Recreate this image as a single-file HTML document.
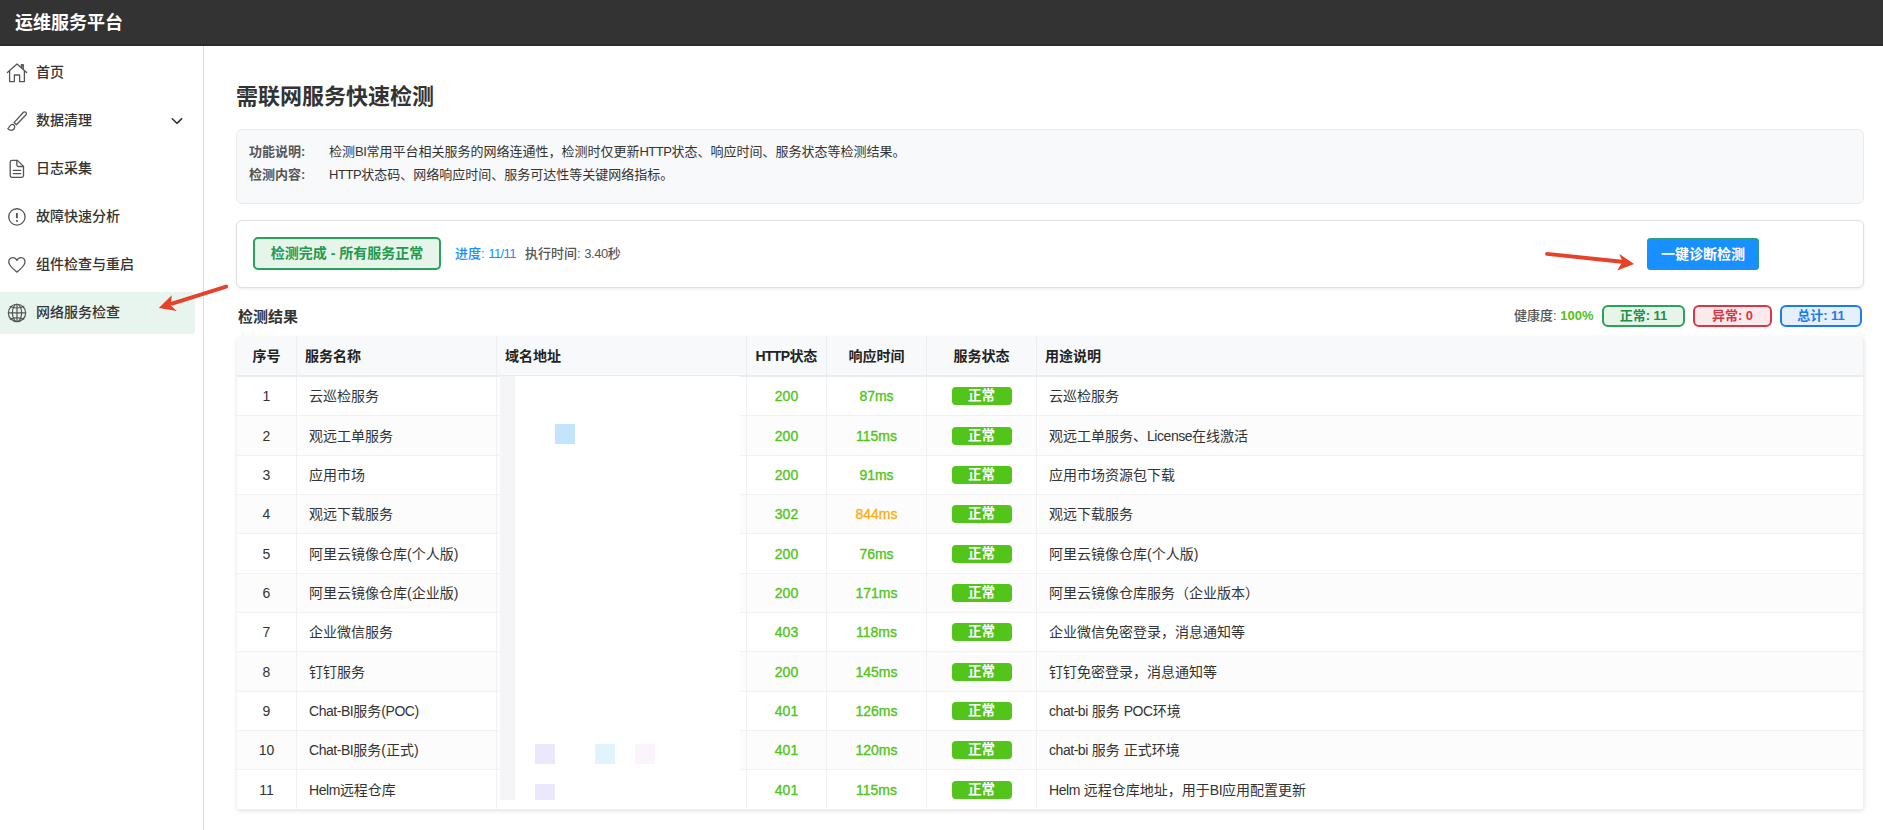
<!DOCTYPE html>
<html lang="zh-CN">
<head>
<meta charset="utf-8">
<title>运维服务平台</title>
<style>
*{box-sizing:border-box;margin:0;padding:0}
html,body{width:1883px;height:830px;overflow:hidden;background:#fff}
body{font-family:"Liberation Sans","Noto Sans CJK SC",sans-serif;color:#333;font-size:14px;position:relative}
.hdr{position:absolute;left:0;top:0;width:1883px;height:46px;background:#333;border-bottom:2px solid #2a2a2a}
.hdr .t{position:absolute;left:15px;top:9px;font-size:18px;font-weight:700;color:#fff;line-height:28px;letter-spacing:0}
.side{position:absolute;left:0;top:46px;width:204px;height:784px;border-right:1px solid #dcdcdc;background:#fff}
.mi{position:absolute;left:0;width:195px;height:42px;line-height:42px;font-size:14px;color:#333}
.mi.act{background:#e8f5ee;border-radius:0 4px 4px 0}
.ico{position:absolute;left:0;top:0;width:204px;height:830px}
.mi .lb{position:absolute;left:36px;top:0;white-space:nowrap;font-weight:500}
.mi.act .lb{top:-1px}
.main{position:absolute;left:204px;top:46px;width:1679px;height:784px}
h1{position:absolute;left:236px;top:81px;font-size:22px;font-weight:700;color:#333;line-height:32px;white-space:nowrap}
.info{position:absolute;left:236px;top:129px;width:1628px;height:75px;background:#f8f9fa;border:1px solid #e9ecef;border-radius:6px;font-size:13px;color:#333}
.info .r{position:absolute;left:12px;white-space:nowrap;line-height:24px}
.info .r b{font-weight:700;color:#555;display:inline-block;width:80px}
.stat{position:absolute;left:236px;top:220px;width:1628px;height:68px;background:#fff;border:1px solid #dfdfdf;border-radius:6px;box-shadow:0 1px 3px rgba(0,0,0,.08)}
.badge{position:absolute;left:16px;top:16px;width:188px;height:33px;border:2px solid #27a35a;border-radius:5px;background:#e6f4ea;color:#1f9a50;font-weight:700;font-size:14px;line-height:29px;text-align:center;white-space:nowrap}
.prog{position:absolute;left:218px;top:22px;font-size:13px;font-weight:500;color:#1890ff;line-height:22px;white-space:nowrap}
.time{position:absolute;left:288px;top:22px;font-size:13px;font-weight:500;color:#555;line-height:22px;white-space:nowrap}
.btn{position:absolute;left:1410px;top:17px;width:112px;height:32px;background:#1890ff;border:1px solid #2aa37a;border-radius:3px;color:#fff;font-weight:700;font-size:14px;line-height:30px;text-align:center;white-space:nowrap}
.rt{position:absolute;left:238px;top:306px;font-size:15px;font-weight:700;color:#333;line-height:22px}
.sum{position:absolute;top:305px;height:22px;font-size:13px;font-weight:500;line-height:22px;white-space:nowrap}
.pill{position:absolute;top:305px;height:22px;border-radius:6px;border:2px solid;font-size:13px;font-weight:700;line-height:18px;text-align:center;white-space:nowrap}
table{position:absolute;left:237px;top:337px;width:1627px;border-collapse:separate;border-spacing:0;table-layout:fixed;font-size:14px;line-height:20px;box-shadow:0 1px 4px rgba(0,0,0,.12)}
th{height:40px;background:#f8f9fa;font-weight:700;color:#222;text-align:left;border-right:1px solid #eceef0;border-bottom:2px solid #e9ecef;padding:0 8px;white-space:nowrap}
td{height:39.35px;border-right:1px solid #f1f1f3;border-bottom:1px solid #f1f1f3;padding:0 12px;white-space:nowrap;color:#333}
tr:nth-child(even) td{background:#fcfcfc}
.mask{position:absolute;left:500px;top:376px;width:240px;height:433px;background:#fff}
.mask i{position:absolute;display:block;width:20px;height:20px}
th:first-child{border-top-left-radius:4px}
th:last-child{border-top-right-radius:4px}
table{border-radius:4px}
.l{letter-spacing:-.45px}
.c{text-align:center;padding:0}
.g{color:#52c41a;font-weight:500;-webkit-text-stroke:.35px #52c41a}
.o{color:#faad14;font-weight:500;-webkit-text-stroke:.35px #faad14}
.ok{display:block;margin:0 auto;width:60px;height:18px;line-height:18px;background:#52c41a;color:#fff;font-weight:700;font-size:13.5px;border-radius:4px;text-align:center}
</style>
</head>
<body>
<div class="hdr"><div class="t">运维服务平台</div></div>
<div class="side">
  <div class="mi" style="top:5px"><span class="lb">首页</span></div>
  <div class="mi" style="top:53px"><span class="lb">数据清理</span></div>
  <div class="mi" style="top:101px"><span class="lb">日志采集</span></div>
  <div class="mi" style="top:149px"><span class="lb">故障快速分析</span></div>
  <div class="mi" style="top:197px"><span class="lb">组件检查与重启</span></div>
  <div class="mi act" style="top:246px"><span class="lb">网络服务检查</span></div>
</div>
<svg class="ico" viewBox="0 0 204 830" fill="none" stroke="#555" stroke-width="1.3" stroke-linecap="round" stroke-linejoin="round">
  <!-- home -->
  <path d="M7.4 72.5 L17 63.9 L26.6 72.5"/>
  <path d="M9.6 71.2 V81.6 H14.4 V75 H19.6 V81.6 H24.4 V71.2"/>
  <path d="M21.4 67.4 V64.7 H23.3 V69" fill="#999"/>
  <!-- brush -->
  <path d="M14 122.6 L23.2 112.5 C24 111.7 25.2 111.7 25.9 112.4 C26.6 113.1 26.5 114.3 25.8 115 L16.4 124.8 Z"/>
  <path d="M7.9 128.6 C9.5 127.6 9.4 125.2 11.6 124.5 C13.4 124 14.8 125.4 14.7 127.2 C14.5 129.4 12.4 130.5 10.5 130.2 C9.3 130 8.5 129.4 7.9 128.6 Z"/>
  <!-- doc -->
  <path d="M16.8 160.4 H12 C10.9 160.4 10.2 161.1 10.2 162.2 V175.6 C10.2 176.7 10.9 177.4 12 177.4 H21.7 C22.8 177.4 23.5 176.7 23.5 175.6 V166.4 L17.4 160.4 Z"/>
  <path d="M16.8 160.4 V164.8 C16.8 165.9 17.4 166.5 18.5 166.5 H23.5"/>
  <path d="M13.3 170.3 H20.7 M13.3 173.7 H20.7"/>
  <!-- exclamation -->
  <circle cx="16.9" cy="216.9" r="8.15"/>
  <path d="M16.9 213 V218.2" stroke-width="1.9" stroke-linecap="butt"/>
  <rect x="15.95" y="220.1" width="1.9" height="1.7" fill="#555" stroke="none"/>
  <!-- heart -->
  <path d="M16.9 260.4 C15.6 257.6 12.8 257.1 11 258 C8.6 259.2 8.2 262 9.6 264.5 C11.3 267.6 14.6 270.2 16.9 272.1 C19.2 270.2 22.5 267.6 24.2 264.5 C25.6 262 25.2 259.2 22.8 258 C21 257.1 18.2 257.6 16.9 260.4 Z"/>
  <!-- globe -->
  <g stroke-width="1.2">
  <circle cx="17" cy="312.9" r="8.65"/>
  <ellipse cx="17" cy="312.9" rx="4.6" ry="8.65"/>
  <path d="M17 304.3 V321.5 M8.4 312.9 H25.6"/>
  <path d="M10.2 306.6 C12 307.6 14.4 308 17 308 C19.6 308 22 307.6 23.8 306.6"/>
  <path d="M10.2 319.2 C12 318.2 14.4 317.8 17 317.8 C19.6 317.8 22 318.2 23.8 319.2"/>
  </g>
  <!-- chevron -->
  <path d="M172.3 118.8 L176.9 123.3 L181.6 118.8" stroke="#333" stroke-width="1.6"/>
</svg>
<h1>需联网服务快速检测</h1>
<div class="info">
  <div class="r" style="top:10px"><b>功能说明:</b>检测<span class="l">BI</span>常用平台相关服务的网络连通性，检测时仅更新<span class="l">HTTP</span>状态、响应时间、服务状态等检测结果。</div>
  <div class="r" style="top:33px"><b>检测内容:</b><span class="l">HTTP</span>状态码、网络响应时间、服务可达性等关键网络指标。</div>
</div>
<div class="stat">
  <div class="badge">检测完成 - 所有服务正常</div>
  <div class="prog">进度: <span class="l" style="letter-spacing:-.6px">11/11</span></div>
  <div class="time">执行时间: <span class="l">3.40</span>秒</div>
  <div class="btn">一键诊断检测</div>
</div>
<div class="rt">检测结果</div>
<div class="sum" style="left:1514px;color:#555">健康度: <b style="color:#52c41a">100%</b></div>
<div class="pill" style="left:1602px;width:83px;border-color:#27a35a;background:#e6f4ea;color:#1f8f4c">正常: 11</div>
<div class="pill" style="left:1693px;width:79px;border-color:#dc3545;background:#fbeaec;color:#dc3545">异常: 0</div>
<div class="pill" style="left:1780px;width:82px;border-color:#1a7cf0;background:#e6f0fd;color:#1a7cf0">总计: 11</div>
<table>
<colgroup><col style="width:60px"><col style="width:200px"><col style="width:250px"><col style="width:80px"><col style="width:100px"><col style="width:110px"><col></colgroup>
<thead><tr><th class="c">序号</th><th>服务名称</th><th>域名地址</th><th class="c"><span class="l" style="letter-spacing:-.7px">HTTP</span>状态</th><th class="c">响应时间</th><th class="c">服务状态</th><th>用途说明</th></tr></thead>
<tbody>
<tr><td class="c">1</td><td>云巡检服务</td><td></td><td class="c g">200</td><td class="c g">87ms</td><td class="c"><span class="ok">正常</span></td><td>云巡检服务</td></tr>
<tr><td class="c">2</td><td>观远工单服务</td><td></td><td class="c g">200</td><td class="c g">115ms</td><td class="c"><span class="ok">正常</span></td><td>观远工单服务、<span class="l">License</span>在线激活</td></tr>
<tr><td class="c">3</td><td>应用市场</td><td></td><td class="c g">200</td><td class="c g">91ms</td><td class="c"><span class="ok">正常</span></td><td>应用市场资源包下载</td></tr>
<tr><td class="c">4</td><td>观远下载服务</td><td></td><td class="c g">302</td><td class="c o">844ms</td><td class="c"><span class="ok">正常</span></td><td>观远下载服务</td></tr>
<tr><td class="c">5</td><td>阿里云镜像仓库(个人版)</td><td></td><td class="c g">200</td><td class="c g">76ms</td><td class="c"><span class="ok">正常</span></td><td>阿里云镜像仓库(个人版)</td></tr>
<tr><td class="c">6</td><td>阿里云镜像仓库(企业版)</td><td></td><td class="c g">200</td><td class="c g">171ms</td><td class="c"><span class="ok">正常</span></td><td>阿里云镜像仓库服务（企业版本）</td></tr>
<tr><td class="c">7</td><td>企业微信服务</td><td></td><td class="c g">403</td><td class="c g">118ms</td><td class="c"><span class="ok">正常</span></td><td>企业微信免密登录，消息通知等</td></tr>
<tr><td class="c">8</td><td>钉钉服务</td><td></td><td class="c g">200</td><td class="c g">145ms</td><td class="c"><span class="ok">正常</span></td><td>钉钉免密登录，消息通知等</td></tr>
<tr><td class="c">9</td><td><span class="l">Chat-BI</span>服务<span class="l">(POC)</span></td><td></td><td class="c g">401</td><td class="c g">126ms</td><td class="c"><span class="ok">正常</span></td><td><span class="l">chat-bi</span> 服务 <span class="l">POC</span>环境</td></tr>
<tr><td class="c">10</td><td><span class="l">Chat-BI</span>服务(正式)</td><td></td><td class="c g">401</td><td class="c g">120ms</td><td class="c"><span class="ok">正常</span></td><td><span class="l">chat-bi</span> 服务 正式环境</td></tr>
<tr><td class="c">11</td><td><span class="l">Helm</span>远程仓库</td><td></td><td class="c g">401</td><td class="c g">115ms</td><td class="c"><span class="ok">正常</span></td><td><span class="l">Helm</span> 远程仓库地址，用于<span class="l">BI</span>应用配置更新</td></tr>
</tbody></table>
<div class="mask"><i style="left:0;top:0;width:15px;height:424px;background:#f5f5f8"></i><i style="left:55px;top:48px;background:#c4e4fc"></i><i style="left:35px;top:368px;background:#ebe8fc"></i><i style="left:95px;top:368px;background:#e0f4fc"></i><i style="left:135px;top:368px;background:#fcf4fc"></i><i style="left:35px;top:408px;height:16px;background:#ebe8fc"></i></div>
<svg class="arr" style="position:absolute;left:0;top:0;width:1883px;height:830px" viewBox="0 0 1883 830">
<path d="M226.2 286.6 L172 303.6" stroke="#e8412a" stroke-width="3.9" stroke-linecap="round" fill="none"/>
<path d="M158.8 307.9 L171.8 295.2 L170.8 305.6 L176.8 310.9 Z" fill="#e8412a"/>
<path d="M1547 253.9 L1622 261.7" stroke="#e8412a" stroke-width="3.9" stroke-linecap="round" fill="none"/>
<path d="M1634.1 263.9 L1619.2 253.9 L1622.6 261.7 L1617.1 270.6 Z" fill="#e8412a"/>
</svg>
</body>
</html>
